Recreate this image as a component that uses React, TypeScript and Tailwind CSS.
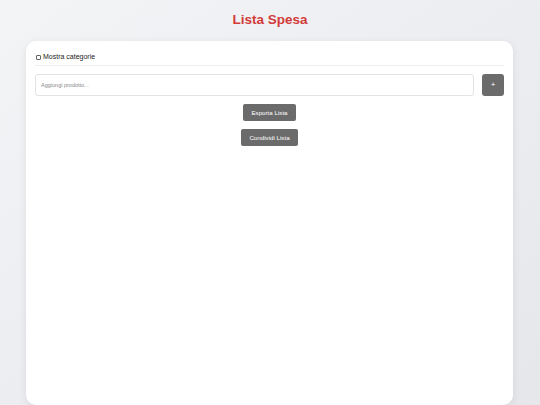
import { useState } from 'react';

export default function App() {
  const [showCategories, setShowCategories] = useState(false);
  const [item, setItem] = useState('');

  return (
    <div
      className="h-[405px] overflow-hidden bg-gradient-to-br from-[#f3f4f6] to-[#e5e7eb] px-[26px] pt-[11px]"
      style={{ fontFamily: '"Liberation Sans", Arial, sans-serif' }}
    >
      <h1 className="text-center text-[13.5px] leading-[18px] font-bold text-[#d33a3a] mb-[12px]">
        Lista Spesa
      </h1>

      <div className="bg-white rounded-[10px] shadow-[0_2px_8px_rgba(0,0,0,0.08)] h-[364px] w-[487px] px-[9px] pt-[11px]">
        <label className="flex items-center gap-[2px] text-[7px] leading-[10px] text-[#222] pb-[3px] border-b border-[#eeeeee] mb-[8px]">
          <input
            type="checkbox"
            checked={showCategories}
            onChange={(e) => setShowCategories(e.target.checked)}
            className="appearance-none w-[5px] h-[5px] m-0 ml-[1px] border border-[#666] rounded-[1px] bg-white checked:bg-[#666]"
          />
          Mostra categorie
        </label>

        <div className="flex gap-[8px]">
          <input
            value={item}
            onChange={(e) => setItem(e.target.value)}
            placeholder="Aggiungi prodotto..."
            className="flex-1 h-[22px] border border-[#e3e3e3] rounded-[3px] px-[5px] text-[5.5px] text-[#333] placeholder:text-[#888] outline-none"
          />
          <button className="w-[22px] h-[22px] bg-[#6b6b6b] rounded-[3px] text-white text-[8px] leading-none flex items-center justify-center">
            +
          </button>
        </div>

        <div className="flex flex-col items-center gap-[8px] mt-[8px]">
          <button className="h-[17px] px-[8px] bg-[#6b6b6b] rounded-[2px] text-white text-[6.2px] font-normal">
            Esporta Lista
          </button>
          <button className="h-[17px] px-[8px] bg-[#6b6b6b] rounded-[2px] text-white text-[6.2px] font-normal">
            Condividi Lista
          </button>
        </div>
      </div>
    </div>
  );
}
